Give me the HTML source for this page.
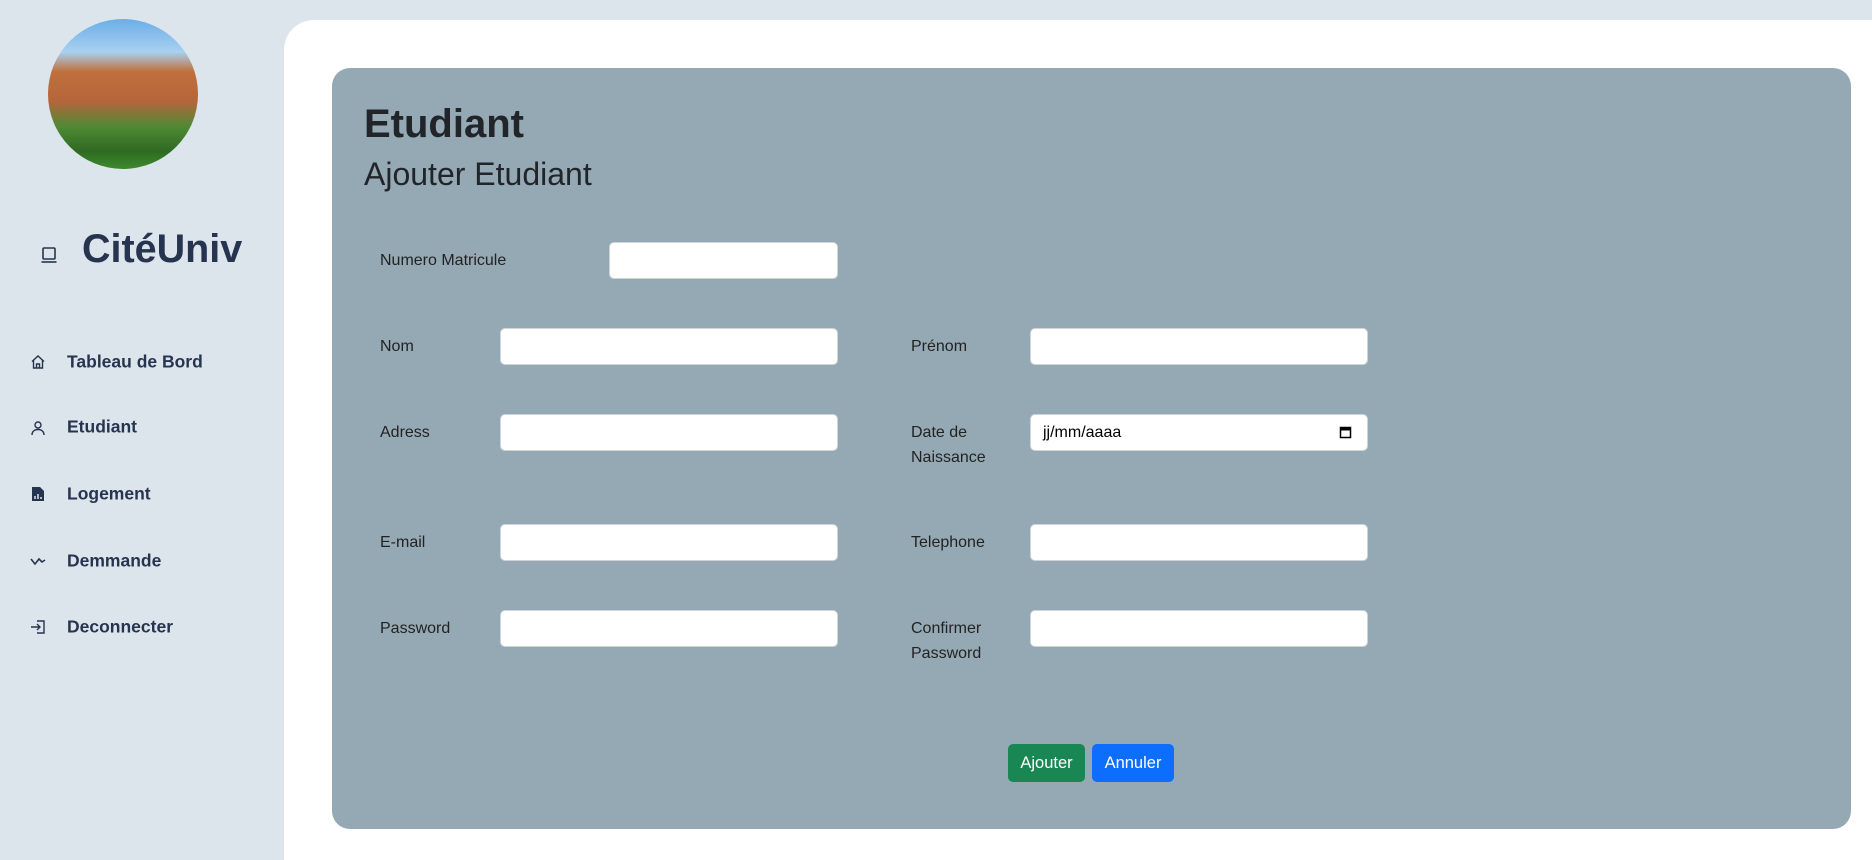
<!DOCTYPE html>
<html><head><meta charset="utf-8"><style>
*{margin:0;padding:0;box-sizing:border-box}
body{width:1872px;height:848px;background:#dde5ec;font-family:"Liberation Sans",sans-serif;position:relative;overflow:hidden}
.a{position:absolute}
.main{left:284px;top:20px;width:1600px;height:840px;background:#fff;border-top-left-radius:30px}
.card{left:332px;top:68px;width:1519px;height:761px;background:#95a9b4;border-radius:18px}
.nav{left:67px;font-size:17.5px;font-weight:bold;color:#26344f;transform:translateY(-50%)}
.lbl{font-size:16px;color:#222;line-height:25px}
.in{background:#fff;border:1px solid #ced4da;border-radius:5px;height:37px}
.btn{color:#fff;font-size:16.5px;border-radius:5px;height:38px;line-height:38px;text-align:center}
</style></head><body>
<div class="a" style="left:48px;top:19px;width:150px;height:150px;border-radius:50%;overflow:hidden;background:linear-gradient(180deg,#6aaee8 0%,#a9d0f0 22%,#c0703c 35%,#b5653a 55%,#4e8a34 72%,#2f6a22 88%,#3c8a2c 100%)"></div>
<svg class="a" style="left:40px;top:246px" width="18" height="18" viewBox="0 0 18 18" fill="none" stroke="#26344f" stroke-width="1.6"><rect x="3" y="2" width="12" height="11" rx="1"/><path d="M1.5 16h15"/></svg>
<div class="a" style="left:82px;top:227px;font-size:39.5px;font-weight:bold;color:#26344f">CitéUniv</div>
<svg class="a" style="left:30px;top:354px" width="16" height="16" viewBox="0 0 16 16" fill="none" stroke="#26344f" stroke-width="1.4"><path d="M2 7.5L8 2l6 5.5M3.5 6.5V14h9V6.5M6.5 14v-4h3v4"/></svg>
<div class="a nav" style="top:362px">Tableau de Bord</div>
<svg class="a" style="left:30px;top:420px" width="16" height="16" viewBox="0 0 16 16" fill="none" stroke="#26344f" stroke-width="1.4"><circle cx="8" cy="5" r="3"/><path d="M2 15c0-4 3-5.5 6-5.5s6 1.5 6 5.5"/></svg>
<div class="a nav" style="top:427px">Etudiant</div>
<svg class="a" style="left:31px;top:486px" width="14" height="16" viewBox="0 0 14 16"><path d="M1 1h8l4 4v10H1z" fill="#26344f"/><path d="M4 13V10M7 13V8M10 13v-2" stroke="#fff" stroke-width="1.3"/></svg>
<div class="a nav" style="top:494px">Logement</div>
<svg class="a" style="left:30px;top:554px" width="16" height="14" viewBox="0 0 16 14" fill="none" stroke="#26344f" stroke-width="1.6"><path d="M1 5l4 5 4-5 3 3 3-2"/></svg>
<div class="a nav" style="top:561px">Demmande</div>
<svg class="a" style="left:30px;top:619px" width="16" height="16" viewBox="0 0 16 16" fill="none" stroke="#26344f" stroke-width="1.4"><path d="M7 2h7v12H7M1 8h9M7 5l3 3-3 3"/></svg>
<div class="a nav" style="top:627px">Deconnecter</div>
<div class="a main"></div>
<div class="a card"></div>
<div class="a" style="left:364px;top:102px;font-size:40px;font-weight:bold;color:#212529">Etudiant</div>
<div class="a" style="left:364px;top:156px;font-size:32px;color:#212529">Ajouter Etudiant</div>
<div class="a lbl" style="left:380px;top:248px">Numero Matricule</div>
<div class="a in" style="left:609px;top:242px;width:229px"></div>
<div class="a lbl" style="left:380px;top:334px">Nom</div>
<div class="a in" style="left:500px;top:328px;width:338px"></div>
<div class="a lbl" style="left:911px;top:334px">Prénom</div>
<div class="a in" style="left:1030px;top:328px;width:338px"></div>
<div class="a lbl" style="left:380px;top:420px">Adress</div>
<div class="a in" style="left:500px;top:414px;width:338px"></div>
<div class="a lbl" style="left:911px;top:420px;line-height:25px">Date de<br>Naissance</div>
<div class="a in" style="left:1030px;top:414px;width:338px;font-size:16px;padding:9px 12px;color:#000">jj/mm/aaaa</div>
<svg class="a" style="left:1339px;top:425px" width="13" height="14" viewBox="0 0 13 14" fill="none" stroke="#000" stroke-width="1.5"><rect x="1.5" y="2.5" width="10" height="10"/><path d="M1.5 4h10" stroke-width="3"/></svg>
<div class="a lbl" style="left:380px;top:530px">E-mail</div>
<div class="a in" style="left:500px;top:524px;width:338px"></div>
<div class="a lbl" style="left:911px;top:530px">Telephone</div>
<div class="a in" style="left:1030px;top:524px;width:338px"></div>
<div class="a lbl" style="left:380px;top:616px">Password</div>
<div class="a in" style="left:500px;top:610px;width:338px"></div>
<div class="a lbl" style="left:911px;top:616px">Confirmer<br>Password</div>
<div class="a in" style="left:1030px;top:610px;width:338px"></div>
<div class="a btn" style="left:1008px;top:744px;width:77px;background:#198754">Ajouter</div>
<div class="a btn" style="left:1092px;top:744px;width:82px;background:#0d6efd">Annuler</div>
</body></html>
